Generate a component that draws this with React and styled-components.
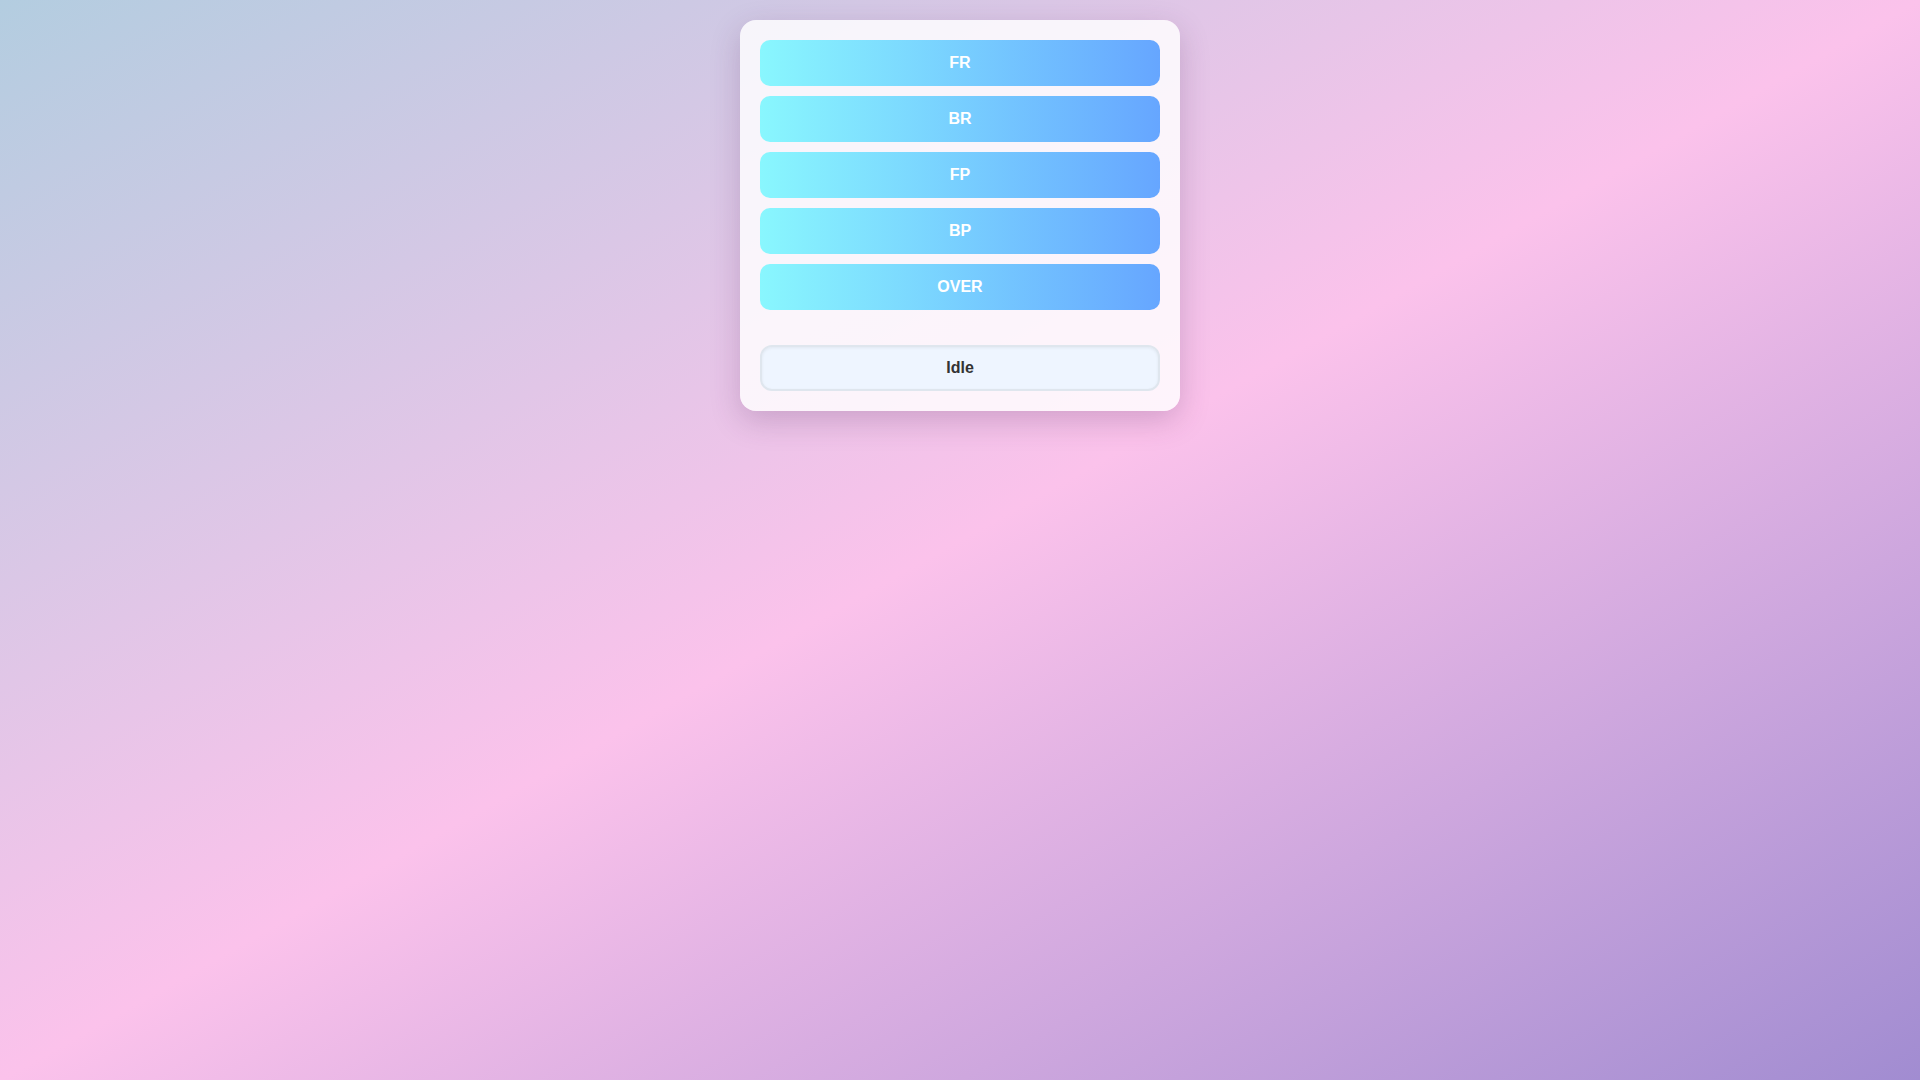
import React, { useState } from "react";
import styled, { createGlobalStyle } from "styled-components";

const GlobalStyle = createGlobalStyle`
  * {
    box-sizing: border-box;
  }

  html {
    overflow-y: scroll;
  }

  html::-webkit-scrollbar {
    width: 15px;
  }

  html::-webkit-scrollbar-track {
    background: #f1f1f1;
  }

  html::-webkit-scrollbar-thumb {
    background: #c1c1c1;
    border: 2px solid #f1f1f1;
  }

  html,
  body {
    margin: 0;
  }

  body {
    padding: 20px;
    min-height: 100vh;
    box-sizing: content-box;
    font-family: "Liberation Sans", Arial, sans-serif;
    background: linear-gradient(to bottom right, #b3cde0 0%, #fbc2eb 50%, #a18cd1 100%);
    background-attachment: fixed;
  }
`;

const Page = styled.div({
  display: "flex",
  justifyContent: "center",
});

const Panel = styled.div({
  width: 440,
  padding: 20,
  borderRadius: 16,
  backgroundColor: "rgba(255, 255, 255, 0.82)",
  boxShadow: "0 10px 30px rgba(80, 40, 90, 0.22)",
  display: "flex",
  flexDirection: "column",
});

const Controls = styled.div({
  display: "flex",
  flexDirection: "column",
  gap: 10,
});

const ControlButton = styled.button({
  height: 46,
  border: "none",
  borderRadius: 10,
  background: "linear-gradient(90deg, #89f7fe 0%, #66a6ff 100%)",
  color: "#ffffff",
  fontFamily: "inherit",
  fontWeight: 700,
  fontSize: 16,
  cursor: "pointer",
});

const Status = styled.div({
  marginTop: 35,
  height: 46,
  borderRadius: 12,
  border: "2px solid #dfe6ee",
  backgroundColor: "#eef5ff",
  boxShadow: "inset 0 1px 3px rgba(0, 0, 0, 0.06)",
  color: "#333333",
  fontWeight: 700,
  fontSize: 16,
  display: "flex",
  alignItems: "center",
  justifyContent: "center",
});

const COMMANDS = ["FR", "BR", "FP", "BP", "OVER"];

export default function App() {
  const [status, setStatus] = useState("Idle");

  return (
    <>
      <GlobalStyle />
      <Page>
        <Panel>
          <Controls>
            {COMMANDS.map((cmd) => (
              <ControlButton key={cmd} onClick={() => setStatus(cmd)}>
                {cmd}
              </ControlButton>
            ))}
          </Controls>
          <Status>{status}</Status>
        </Panel>
      </Page>
    </>
  );
}
